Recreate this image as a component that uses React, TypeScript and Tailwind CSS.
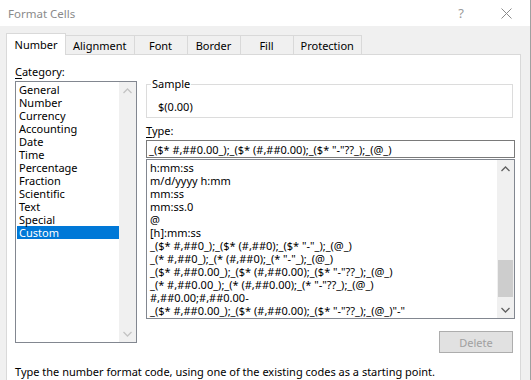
import type { ReactNode } from 'react'

const categories = [
  'General',
  'Number',
  'Currency',
  'Accounting',
  'Date',
  'Time',
  'Percentage',
  'Fraction',
  'Scientific',
  'Text',
  'Special',
  'Custom',
]

const codes = [
  'h:mm:ss',
  'm/d/yyyy h:mm',
  'mm:ss',
  'mm:ss.0',
  '@',
  '[h]:mm:ss',
  '_($* #,##0_);_($* (#,##0);_($* "-"_);_(@_)',
  '_(* #,##0_);_(* (#,##0);_(* "-"_);_(@_)',
  '_($* #,##0.00_);_($* (#,##0.00);_($* "-"??_);_(@_)',
  '_(* #,##0.00_);_(* (#,##0.00);_(* "-"??_);_(@_)',
  '#,##0.00;#,##0.00-',
  '_($* #,##0.00_);_($* (#,##0.00);_($* "-"??_);_(@_)"-"',
]

const tabs = ['Alignment', 'Font', 'Border', 'Fill', 'Protection']

function Chevron({ up, color }: { up?: boolean; color: string }) {
  return (
    <svg width="9" height="6" viewBox="0 0 9 6" aria-hidden="true">
      <polyline
        points={up ? '0.5,5 4.5,1 8.5,5' : '0.5,1 4.5,5 8.5,1'}
        fill="none"
        stroke={color}
        strokeWidth="1.3"
      />
    </svg>
  )
}

function Scrollbar({ disabled, thumb }: { disabled?: boolean; thumb?: ReactNode }) {
  const c = disabled ? '#c4c4c4' : '#606060'
  return (
    <div className="flex w-[17px] shrink-0 flex-col bg-[#f0f0f0]">
      <div className="flex h-[17px] items-center justify-center">
        <Chevron up color={c} />
      </div>
      <div className="flex flex-1 flex-col justify-end">{thumb}</div>
      <div className="flex h-[17px] items-center justify-center">
        <Chevron color={c} />
      </div>
    </div>
  )
}

export default function App() {
  return (
    <div
      className="h-[380px] w-[531px] overflow-hidden border-r border-[#a0a0a0] bg-[#f0f0f0] text-[11px] leading-[13px] text-black"
      style={{ fontFamily: '"Noto Sans", "Open Sans", sans-serif' }}
    >
      {/* title bar */}
      <div className="flex h-[26px] items-center bg-white pl-[8px] pr-[18px]">
        <span className="text-[11.5px] text-[#8a8a8a]">Format Cells</span>
        <span className="ml-auto text-[13px] text-[#9a9a9a]">?</span>
        <svg className="ml-[37px]" width="11" height="11" viewBox="0 0 11 11" aria-hidden="true">
          <path d="M0.5 0.5 L10.5 10.5 M10.5 0.5 L0.5 10.5" stroke="#8a8a8a" strokeWidth="1" />
        </svg>
      </div>

      {/* tabs */}
      <div className="flex items-end pl-[6px] pt-[7px]">
        <div className="relative z-10 -mb-px flex h-[22px] w-[60px] items-start justify-center border border-b-0 border-[#d9d9d9] bg-white pt-[4px]">
          Number
        </div>
        {tabs.map((t) => (
          <div
            key={t}
            className="-ml-px flex h-[19px] min-w-[54px] items-center justify-center border border-b-0 border-[#d9d9d9] px-[7px]"
          >
            {t}
          </div>
        ))}
      </div>

      {/* panel */}
      <div className="ml-[6px] h-[340px] w-[515px] border border-[#d9d9d9] bg-white pl-[8px] pt-[10px]">
        <div className="flex items-start">
          {/* category */}
          <div className="w-[122px]">
            <div className="h-[14px] leading-[14px]">
              <span className="underline underline-offset-2">C</span>ategory:
            </div>
            <div className="mt-[2px] flex h-[262px] border border-[#828790]">
              <div className="flex-1 pl-[1px] pt-[1px]">
                {categories.map((c) => (
                  <div
                    key={c}
                    className={
                      c === 'Custom'
                        ? 'h-[13px] bg-[#0078d7] pl-[2px] text-white'
                        : 'h-[13px] pl-[2px]'
                    }
                  >
                    {c}
                  </div>
                ))}
              </div>
              <Scrollbar disabled />
            </div>
          </div>

          {/* right side */}
          <div className="ml-[9px] flex w-[369px] flex-col">
            <div className="relative mt-[19px] h-[34px] w-[367px] border border-[#dcdcdc] pl-[11px] pt-[15px]">
              <span className="absolute left-[4px] top-[-8px] bg-white px-[1px] leading-[14px]">Sample</span>
              $(0.00)
            </div>
            <div className="mt-[6px] h-[14px] leading-[14px]">
              <span className="underline underline-offset-2">T</span>ype:
            </div>
            <div className="mt-[2px] flex h-[18px] items-center border border-[#7a7a7a] pl-[2px]">
              {codes[8]}
            </div>
            <div className="mt-[1px] flex h-[160px] border border-[#828790]">
              <div className="flex-1 overflow-hidden pl-[3px] pt-[1px]">
                {codes.map((c, i) => (
                  <div key={i} className="h-[13px] whitespace-pre">
                    {c}
                  </div>
                ))}
              </div>
              <Scrollbar thumb={<div className="mx-auto mb-[4px] h-[37px] w-[15px] bg-[#cdcdcd]" />} />
            </div>
            <div className="mr-[2px] mt-[12px] flex h-[22px] w-[74px] items-center justify-center self-end border border-[#adadad] bg-[#e1e1e1] text-[#a0a0a0]">
              Delete
            </div>
          </div>
        </div>
        <p className="mt-[12px] leading-[14px]">
          Type the number format code, using one of the existing codes as a starting point.
        </p>
      </div>
    </div>
  )
}
